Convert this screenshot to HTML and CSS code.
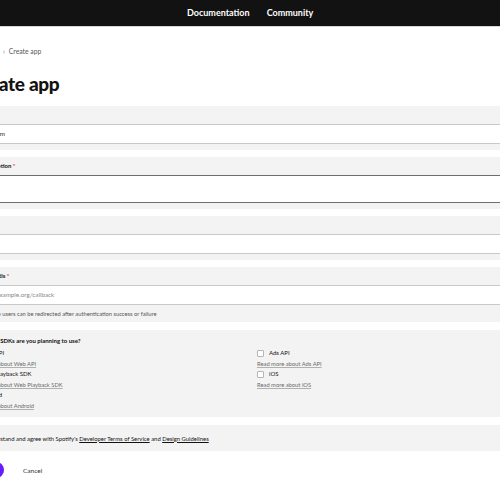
FILE: index.html
```html
<!DOCTYPE html>
<html lang="en">
<head>
<meta charset="utf-8">
<title>Create app</title>
<link rel="stylesheet" href="styles.css">
</head>
<body>
<header class="topbar">
  <nav class="topnav">
    <a class="topnav-link">Documentation</a>
    <a class="topnav-link">Community</a>
  </nav>
</header>
<main class="page">
  <div class="crumbs"><a class="crumb-link">Dashboard</a><span class="crumb-sep">›</span><span class="crumb-current">Create app</span></div>
  <h1 class="title">Create app</h1>
  <form class="form">
    <div class="card">
      <label class="label">App name <span class="req">*</span></label>
      <div class="input">Jam Room</div>
    </div>
    <div class="card">
      <label class="label">App description <span class="req">*</span></label>
      <div class="input textarea"></div>
    </div>
    <div class="card">
      <label class="label">Website</label>
      <div class="input"></div>
    </div>
    <div class="card card-help">
      <label class="label">Redirect URIs <span class="req">*</span></label>
      <div class="input placeholder">https://example.org/callback</div>
      <p class="help">A URI where users can be redirected after authentication success or failure</p>
    </div>
    <div class="card card-sdk">
      <p class="question">Which API/SDKs are you planning to use?</p>
      <div class="sdk-grid">
        <div class="sdk">
          <div class="sdk-row"><span class="box"></span><span class="sdk-name">Web API</span></div>
          <a class="sdk-link">Read more about Web API</a>
        </div>
        <div class="sdk">
          <div class="sdk-row"><span class="box"></span><span class="sdk-name">Ads API</span></div>
          <a class="sdk-link">Read more about Ads API</a>
        </div>
        <div class="sdk">
          <div class="sdk-row"><span class="box"></span><span class="sdk-name">Web Playback SDK</span></div>
          <a class="sdk-link">Read more about Web Playback SDK</a>
        </div>
        <div class="sdk">
          <div class="sdk-row"><span class="box"></span><span class="sdk-name">iOS</span></div>
          <a class="sdk-link">Read more about iOS</a>
        </div>
        <div class="sdk">
          <div class="sdk-row"><span class="box"></span><span class="sdk-name">Android</span></div>
          <a class="sdk-link">Read more about Android</a>
        </div>
      </div>
    </div>
    <div class="card card-terms">
      <span class="box"></span>
      <span class="terms">I understand and agree with Spotify's <a class="terms-link">Developer Terms of Service</a> and <a class="terms-link">Design Guidelines</a></span>
    </div>
    <div class="actions">
      <button class="btn-save" type="button">Save</button>
      <button class="btn-cancel" type="button">Cancel</button>
    </div>
  </form>
</main>
</body>
</html>
```
FILE: styles.css
```css
html, body {
  margin: 0;
  padding: 0;
  overflow: hidden;
  background: #ffffff;
}

body {
  font-family: Lato, "Liberation Sans", sans-serif;
  color: #121212;
  width: 500px;
  height: 500px;
}

.topbar {
  height: 26px;
  background: #121212;
  border-bottom: 1px solid #d6d6d6;
  display: flex;
  align-items: center;
  padding-left: 187px;
}

.topnav {
  display: flex;
  gap: 17px;
}

.topnav-link {
  color: #ffffff;
  font-size: 9px;
  font-weight: 700;
  line-height: 12px;
}

.page {
  margin-left: -40px;
  width: 640px;
}

.crumbs {
  margin-top: 20px;
  padding-left: 6.5px;
  font-size: 6.8px;
  line-height: 8px;
  color: #5a5a5a;
  display: flex;
  align-items: center;
}

.crumb-sep {
  margin: 0 4px 0 4px;
  color: #777777;
}

.title {
  margin: 18px 0 11px 10px;
  font-size: 19px;
  line-height: 22px;
  font-weight: 900;
  letter-spacing: -0.3px;
}

.form {
  display: flex;
  flex-direction: column;
}

.card {
  background: #f3f3f3;
  padding: 0 9px 6px;
  margin-bottom: 7px;
}

.label {
  display: block;
  height: 18px;
  font-size: 6px;
  line-height: 18px;
  font-weight: 700;
}

.req {
  color: #e22134;
}

.input {
  height: 18px;
  background: #ffffff;
  border: 1px solid #c9c9c9;
  padding-left: 6.5px;
  font-size: 6.3px;
  line-height: 18px;
  color: #222222;
}

.textarea {
  height: 26px;
  border-color: #6f6f6f;
}

.placeholder {
  color: #8a8a8a;
}

.card-help {
  padding-bottom: 0;
  margin-bottom: 8px;
}

.help {
  margin: 0;
  height: 17px;
  line-height: 17px;
  font-size: 5.75px;
  color: #555555;
}

.card-sdk {
  padding-top: 6px;
  padding-bottom: 6px;
  margin-bottom: 8px;
}

.question {
  margin: 0 0 2px;
  font-size: 6px;
  line-height: 10px;
  font-weight: 700;
}

.sdk-grid {
  display: grid;
  grid-template-columns: 288px 288px;
}

.sdk {
  display: flex;
  flex-direction: column;
}

.sdk-row {
  display: flex;
  align-items: center;
  gap: 5px;
  height: 10.5px;
}

.box {
  width: 5px;
  height: 5px;
  border: 1px solid #b5b5b5;
  border-radius: 1px;
  background: #ffffff;
  flex: none;
}

.sdk-name {
  font-size: 6px;
  line-height: 10.5px;
  color: #121212;
}

.sdk-link {
  font-size: 5.8px;
  line-height: 10.5px;
  color: #6a6a6a;
  text-decoration: underline;
  text-decoration-color: #b0b0b0;
}

.card-terms {
  display: flex;
  align-items: center;
  gap: 6px;
  height: 26px;
  padding-bottom: 0;
  margin-bottom: 11px;
}

.terms {
  font-size: 5.9px;
  color: #121212;
}

.terms-link {
  text-decoration: underline;
}

.actions {
  display: flex;
  align-items: center;
  padding-left: 9px;
  gap: 19px;
}

.btn-save {
  height: 16px;
  width: 35px;
  border: none;
  border-radius: 8px;
  background: #651dff;
  color: #ffffff;
  font-family: inherit;
  font-size: 6px;
  font-weight: 700;
  padding: 0;
}

.btn-cancel {
  border: none;
  background: none;
  padding: 0;
  font-family: inherit;
  font-size: 6.5px;
  color: #333333;
}
```
